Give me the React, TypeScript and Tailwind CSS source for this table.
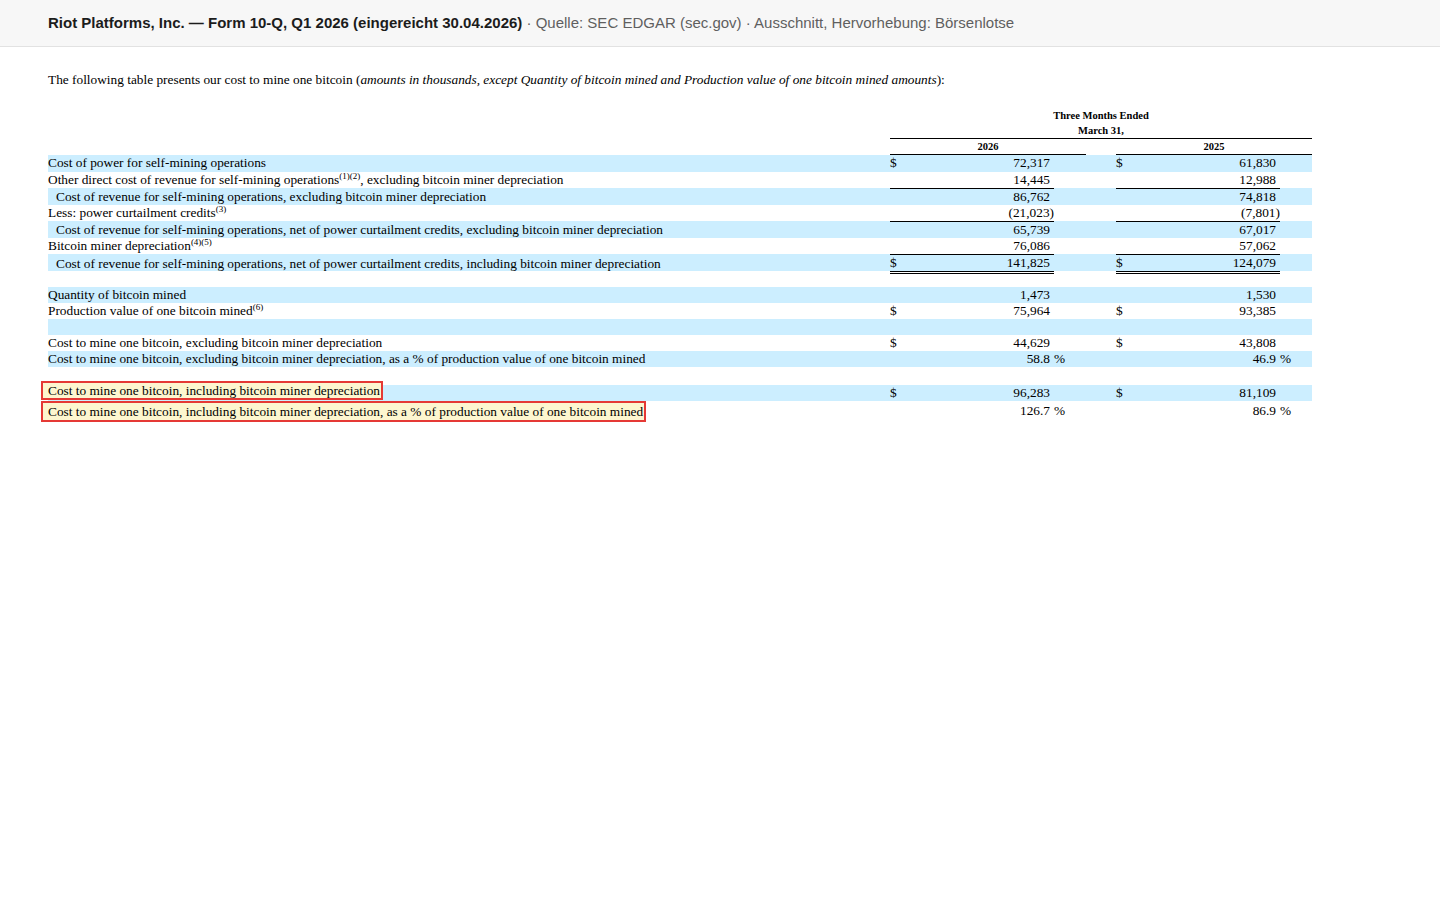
import React from "react";

type Row = {
  label: React.ReactNode;
  indent?: boolean;
  blue?: boolean;
  a?: string;
  b?: string;
  dollar?: boolean;
  pct?: boolean;
  topRule?: boolean;
  doubleRule?: boolean;
  h: string;
  mark?: string;
};

const Sup = ({ children }: { children: React.ReactNode }) => (
  <sup className="text-[9px]">{children}</sup>
);

const rows: Row[] = [
  { label: "Cost of power for self-mining operations", blue: true, dollar: true, a: "72,317", b: "61,830", h: "h-[16.5px]" },
  {
    label: (
      <>
        Other direct cost of revenue for self-mining operations<Sup>(1)(2)</Sup>, excluding bitcoin miner depreciation
      </>
    ),
    a: "14,445",
    b: "12,988",
    h: "h-[16.5px]",
  },
  { label: "Cost of revenue for self-mining operations, excluding bitcoin miner depreciation", indent: true, blue: true, topRule: true, a: "86,762", b: "74,818", h: "h-[16.5px]" },
  {
    label: (
      <>
        Less: power curtailment credits<Sup>(3)</Sup>
      </>
    ),
    a: "(21,023)",
    b: "(7,801)",
    h: "h-[16.5px]",
  },
  { label: "Cost of revenue for self-mining operations, net of power curtailment credits, excluding bitcoin miner depreciation", indent: true, blue: true, topRule: true, a: "65,739", b: "67,017", h: "h-[16.5px]" },
  {
    label: (
      <>
        Bitcoin miner depreciation<Sup>(4)(5)</Sup>
      </>
    ),
    a: "76,086",
    b: "57,062",
    h: "h-[16.5px]",
  },
  { label: "Cost of revenue for self-mining operations, net of power curtailment credits, including bitcoin miner depreciation", indent: true, blue: true, topRule: true, doubleRule: true, dollar: true, a: "141,825", b: "124,079", h: "h-[16.5px]" },
  { label: "", h: "h-[16px]" },
  { label: "Quantity of bitcoin mined", blue: true, a: "1,473", b: "1,530", h: "h-[16px]" },
  {
    label: (
      <>
        Production value of one bitcoin mined<Sup>(6)</Sup>
      </>
    ),
    dollar: true,
    a: "75,964",
    b: "93,385",
    h: "h-[16px]",
  },
  { label: "", blue: true, h: "h-[16px]" },
  { label: "Cost to mine one bitcoin, excluding bitcoin miner depreciation", dollar: true, a: "44,629", b: "43,808", h: "h-[16px]" },
  { label: "Cost to mine one bitcoin, excluding bitcoin miner depreciation, as a % of production value of one bitcoin mined", blue: true, pct: true, a: "58.8", b: "46.9", h: "h-[16px]" },
  { label: "", h: "h-[18px]" },
  { label: "Cost to mine one bitcoin, including bitcoin miner depreciation", blue: true, dollar: true, a: "96,283", b: "81,109", h: "h-[16px]", mark: "leading-[15px] -mt-[4px]" },
  { label: "Cost to mine one bitcoin, including bitcoin miner depreciation, as a % of production value of one bitcoin mined", pct: true, a: "126.7", b: "86.9", h: "h-[17px]", mark: "leading-[17px]" },
];

function Amount({ row, value }: { row: Row; value?: string }) {
  const neg = value?.startsWith("(");
  const rule = row.topRule ? "border-t border-black" : "";
  const dbl = row.doubleRule ? "border-b-[3px] border-double border-black" : "";
  return (
    <div className="grid grid-cols-[164px_32px] h-full">
      <div className={`flex items-center justify-between pr-[4px] ${rule} ${dbl}`}>
        <span>{row.dollar ? "$" : ""}</span>
        <span>
          {neg ? (
            <>
              {value!.slice(0, -1)}
              <span className="-mr-[4px]">)</span>
            </>
          ) : (
            value
          )}
        </span>
      </div>
      <div className="flex items-center">{row.pct ? <span>%</span> : null}</div>
    </div>
  );
}

export default function App() {
  return (
    <div className="min-h-screen bg-white">
      <div className="h-[47px] bg-[#f7f7f7] border-b border-[#e2e2e2] flex items-center pt-[1px] px-12 font-['Liberation_Sans',Arial,sans-serif] text-[15px]">
        <span className="font-bold text-[#1c1c1c]">Riot Platforms, Inc. — Form 10-Q, Q1 2026 (eingereicht 30.04.2026)</span>
        <span className="text-[#5f5f5f]">&nbsp;· Quelle: SEC EDGAR (sec.gov) · Ausschnitt, Hervorhebung: Börsenlotse</span>
      </div>

      <div className="px-12 pt-[25px] font-['Liberation_Serif','Times_New_Roman',serif] text-[13.33px] text-black">
        <p className="leading-[16px]">
          The following table presents our cost to mine one bitcoin (
          <i>amounts in thousands, except Quantity of bitcoin mined and Production value of one bitcoin mined amounts</i>):
        </p>

        <div className="w-[1264px] mt-[20px]">
          <div className="grid grid-cols-[842px_196px_30px_196px] text-[10.5px] font-bold leading-[15px]">
            <div />
            <div className="col-span-3 text-center h-[15px]">Three Months Ended</div>
            <div />
            <div className="col-span-3 text-center h-[16px] border-b border-black">March 31,</div>
            <div />
            <div className="text-center h-[16px] border-b border-black">2026</div>
            <div />
            <div className="text-center h-[16px] border-b border-black">2025</div>
          </div>

          {rows.map((row, i) => (
            <div
              key={i}
              className={`grid grid-cols-[842px_196px_30px_196px] ${row.h} ${row.blue ? "bg-[#cceeff]" : ""} leading-[16px] whitespace-nowrap`}
            >
              <div className={`flex items-center ${row.indent ? "pl-[8px]" : ""}`}>
                {row.mark ? (
                  <span className={`relative inline-block -ml-[7px] border-2 border-[#e53935] bg-[#fdf6cf] pl-[5px] pr-[1px] ${row.mark}`}>
                    {row.label}
                  </span>
                ) : (
                  <span>{row.label}</span>
                )}
              </div>
              <Amount row={row} value={row.a} />
              <div />
              <Amount row={row} value={row.b} />
            </div>
          ))}
        </div>
      </div>
    </div>
  );
}
